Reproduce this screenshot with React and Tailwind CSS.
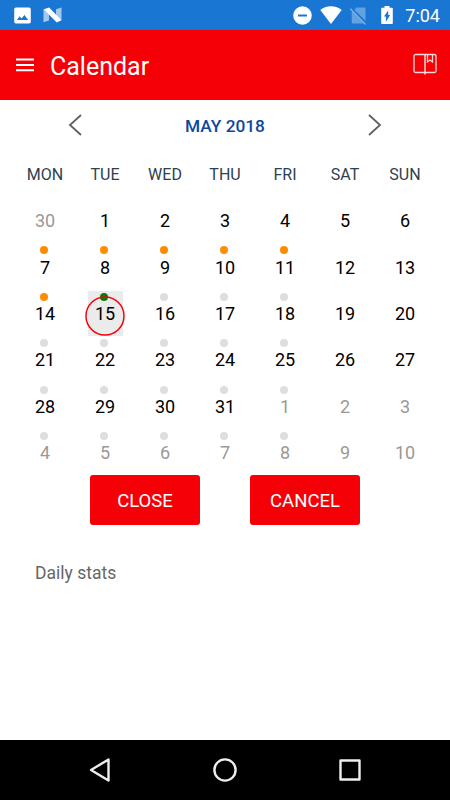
const weekDays = ["MON", "TUE", "WED", "THU", "FRI", "SAT", "SUN"];

const weeks = [
  { days: [30, 1, 2, 3, 4, 5, 6], dots: ["orange", "orange", "orange", "orange", "orange"] },
  { days: [7, 8, 9, 10, 11, 12, 13], dots: ["orange", "green", "gray", "gray", "gray"] },
  { days: [14, 15, 16, 17, 18, 19, 20], dots: ["gray", "gray", "gray", "gray", "gray"] },
  { days: [21, 22, 23, 24, 25, 26, 27], dots: ["gray", "gray", "gray", "gray", "gray"] },
  { days: [28, 29, 30, 31, 1, 2, 3], dots: ["gray", "gray", "gray", "gray", "gray"] },
  { days: [4, 5, 6, 7, 8, 9, 10], dots: [] },
];

const dotColors = {
  orange: "bg-[#ff8c00]",
  green: "bg-[#087a08]",
  gray: "bg-[#dedede]",
};

function StatusBar() {
  return (
    <div className="flex h-[30px] items-center justify-between bg-[#1976d2] pr-[10px] pl-[14px] text-white">
      <div className="flex items-center gap-3">
        <svg width="17" height="17" viewBox="0 0 17 17">
          <path fill="currentColor" fillRule="evenodd" d="M2 .5h13a1.800 1.800 0 0 1 1.800 1.800v12.400a1.800 1.800 0 0 1-1.800 1.800H2a1.800 1.800 0 0 1-1.800-1.800V2.300A1.800 1.800 0 0 1 2 .5zM3 13h11.200l-3.800-5-2.800 3.600-2-2.300z" />
        </svg>
        <svg width="19" height="16" viewBox="0 0 19 16">
          <path fill="currentColor" opacity=".6" d="M.5 2v13.300l5.500-1.800V6zM18.500 13.500V.5L13 2.200v7z" />
          <path fill="currentColor" d="M.8 2.200 6.200.4l12.300 12.800-4.800 2.400z" />
        </svg>
      </div>
      <div className="flex items-center">
        <svg className="mr-2" width="19" height="19" viewBox="0 0 19 19">
          <path fill="currentColor" fillRule="evenodd" d="M9.500.2a9.300 9.300 0 1 1 0 18.600 9.300 9.300 0 0 1 0-18.600zM5 8.400v2.200h9V8.400z" />
        </svg>
        <svg className="mr-2" width="22" height="18" viewBox="0 0 23 18" preserveAspectRatio="none">
          <path fill="currentColor" d="M11.500 18 .3 4C3 1.800 7 .2 11.500.2S20 1.800 22.700 4z" />
        </svg>
        <svg className="mr-[14px]" width="17" height="19" viewBox="0 0 17 19">
          <path fill="currentColor" opacity=".32" d="M6.500 1.500h7.800a1.200 1.200 0 0 1 1.200 1.200v12L4.300 3.700zM1.700 5l11.800 12.500H2.900a1.200 1.200 0 0 1-1.200-1.200z" />
          <path stroke="currentColor" strokeWidth="1.200" opacity=".45" d="M.4 2.700 15.500 18.500" />
        </svg>
        <svg className="mr-3" width="12" height="18" viewBox="0 0 12 18">
          <path fill="currentColor" fillRule="evenodd" d="M3.500 0h5v1.800h2.500a.8.8 0 0 1 .8.8v14.600a.8.8 0 0 1-.8.8H1a.8.8 0 0 1-.8-.8V2.600a.8.8 0 0 1 .8-.8h2.500zM7.200 4.500 2.900 10.500h2v5.200L9.200 9H7.200z" />
        </svg>
        <span className="pt-px text-[18px] leading-[30px]">7:04</span>
      </div>
    </div>
  );
}

function Header() {
  return (
    <header className="flex h-[70px] items-center bg-[#f60008] pr-[13px] pl-4 text-white">
      <svg width="18" height="14" viewBox="0 0 18 14" fill="currentColor">
        <path d="M0 .5h18v2H0zM0 6h18v2H0zM0 11.200h18v2H0z" />
      </svg>
      <h1 className="ml-4 flex-1 pt-[3px] text-[25px]">Calendar</h1>
      <svg className="-mt-0.5" width="24" height="22" viewBox="0 0 24 22" fill="none" stroke="currentColor" strokeWidth="1.300" opacity=".85">
        <path d="M12 19.500H2.500A1.500 1.500 0 0 1 1 18V3a1.500 1.500 0 0 1 1.500-1.500h19A1.500 1.500 0 0 1 23 3v15a1.500 1.500 0 0 1-1.500 1.500zM14.500 1.500V9l2.500-2L19.500 9V1.500" />
        <path strokeWidth="1.500" d="M12 1.500v20" />
      </svg>
    </header>
  );
}

function Day({ day, muted, selected, dot }) {
  return (
    <div className="relative flex justify-center">
      {selected && <span className="absolute top-[0.800px] left-[12.500px] h-[45px] w-[35px] bg-[#ebebeb]" />}
      <span className={`relative pt-[13.300px] text-[18px] leading-[21px] ${muted ? "text-[#999]" : "text-black"}`}>{day}</span>
      {dot && <span className={`absolute top-[49.400px] left-[25px] z-10 size-2 rounded-full ${dotColors[dot]}`} />}
      {selected && (
        <svg className="absolute top-[6.500px] left-[10.300px] z-20" width="40" height="40" viewBox="0 0 40 40" fill="none">
          <circle cx="20" cy="20" r="19" stroke="#f60008" strokeWidth="1.500" />
        </svg>
      )}
    </div>
  );
}

function Calendar() {
  return (
    <section className="px-[15px]">
      <div className="flex h-[50px] items-center justify-between px-[53px]">
        <svg width="15" height="22" viewBox="0 0 15 22" fill="none" stroke="#606060" strokeWidth="1.800">
          <path d="M13 1 2 11l11 10" />
        </svg>
        <span className="pt-[3px] text-[17.300px] font-medium text-[#0d47a1]">MAY 2018</span>
        <svg width="15" height="22" viewBox="0 0 15 22" fill="none" stroke="#606060" strokeWidth="1.800">
          <path d="m2 1 11 10L2 21" />
        </svg>
      </div>
      <div className="grid h-[47px] grid-cols-7 items-center pt-0.5 text-center text-[16px] text-[#2d4150]">
        {weekDays.map((name) => (
          <span key={name}>{name}</span>
        ))}
      </div>
      {weeks.map((week, row) => (
        <div key={row} className="grid h-[46.400px] grid-cols-7">
          {week.days.map((day, col) => (
            <Day
              key={col}
              day={day}
              muted={(row === 0 && day > 7) || (row > 3 && day < 15)}
              selected={row === 2 && day === 15}
              dot={week.dots[col]}
            />
          ))}
        </div>
      ))}
    </section>
  );
}

function NavBar() {
  return (
    <nav className="flex h-[60px] items-center justify-between bg-black px-[87px] text-[#eee]">
      <svg width="26" height="26" viewBox="0 0 26 26" fill="none" stroke="currentColor" strokeWidth="2.400" strokeLinejoin="round">
        <path d="M4 13 21.500 2.500v21z" />
      </svg>
      <svg width="26" height="26" viewBox="0 0 26 26" fill="none" stroke="currentColor" strokeWidth="2.400">
        <circle cx="13" cy="13" r="10.600" />
      </svg>
      <svg width="26" height="26" viewBox="0 0 26 26" fill="none" stroke="currentColor" strokeWidth="2.400" strokeLinejoin="round">
        <path d="M3.500 3.500h19v19h-19z" />
      </svg>
    </nav>
  );
}

export default function App() {
  return (
    <div className="flex h-[800px] w-[450px] flex-col overflow-hidden bg-white font-['Roboto',sans-serif]">
      <StatusBar />
      <Header />
      <main className="flex-1">
        <Calendar />
        <div className="-mt-[0.400px] flex justify-center gap-[50px] text-[18.500px] text-white">
          <button className="h-[50px] w-[110px] rounded-[3px] bg-[#f60008] pt-1">CLOSE</button>
          <button className="h-[50px] w-[110px] rounded-[3px] bg-[#f60008] pt-1">CANCEL</button>
        </div>
        <p className="mt-[35px] pl-[35px] text-[17.500px] leading-[27px] text-[#666]">Daily stats</p>
      </main>
      <NavBar />
    </div>
  );
}
